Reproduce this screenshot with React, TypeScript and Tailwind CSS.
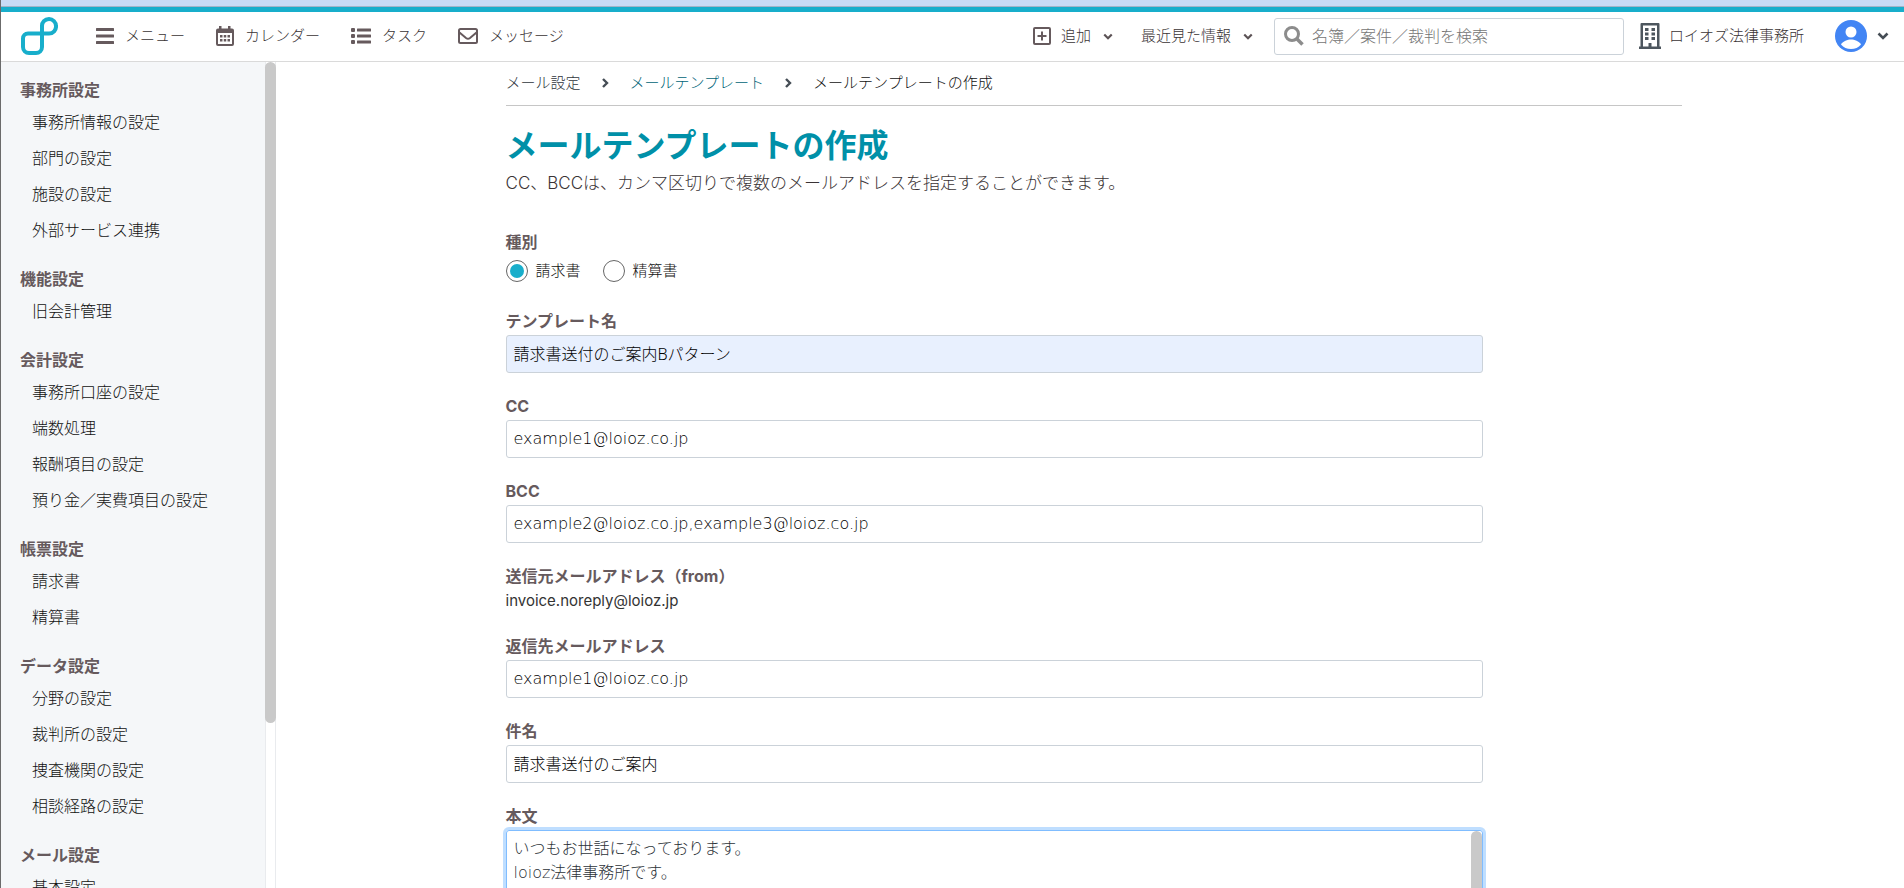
import type { ReactNode } from "react";

type MenuSection = { title: string; items: string[] };

const SECTIONS: MenuSection[] = [
  { title: "事務所設定", items: ["事務所情報の設定", "部門の設定", "施設の設定", "外部サービス連携"] },
  { title: "機能設定", items: ["旧会計管理"] },
  { title: "会計設定", items: ["事務所口座の設定", "端数処理", "報酬項目の設定", "預り金／実費項目の設定"] },
  { title: "帳票設定", items: ["請求書", "精算書"] },
  { title: "データ設定", items: ["分野の設定", "裁判所の設定", "捜査機関の設定", "相談経路の設定"] },
  { title: "メール設定", items: ["基本設定"] },
];

function Logo() {
  return (
    <svg width="38" height="40" viewBox="0 0 38 40" fill="none" stroke="#18aecb" strokeWidth="4" aria-hidden="true">
      <path d="M22 17.500H8a5 5 0 0 0-5 5V31a6 6 0 0 0 6 6h7a6 6 0 0 0 6-6V10.500a7 7 0 0 1 7-7.500a7 7 0 0 1 7 7a7 7 0 0 1-7 7.500z" />
    </svg>
  );
}

function MenuIcon() {
  return (
    <svg width="18" height="16" viewBox="0 0 18 16" fill="#665a5d" aria-hidden="true">
      <rect y="0" width="18" height="3" rx="0.500" />
      <rect y="6.500" width="18" height="3" rx="0.500" />
      <rect y="13" width="18" height="3" rx="0.500" />
    </svg>
  );
}

function CalendarIcon() {
  return (
    <svg width="18" height="20" viewBox="0 0 18 20" aria-hidden="true">
      <path fill="#665a5d" d="M3 0h2.500v2.500h6.500V0h2.500v2.500h1.500a2 2 0 0 1 2 2V18a2 2 0 0 1-2 2H2a2 2 0 0 1-2-2V4.500a2 2 0 0 1 2-2h1z" />
      <rect x="2" y="7" width="14" height="11" fill="#fff" />
      <g fill="#665a5d">
        <rect x="4" y="9" width="2.500" height="2.500" />
        <rect x="7.750" y="9" width="2.500" height="2.500" />
        <rect x="11.500" y="9" width="2.500" height="2.500" />
        <rect x="4" y="13" width="2.500" height="2.500" />
        <rect x="7.750" y="13" width="2.500" height="2.500" />
        <rect x="11.500" y="13" width="2.500" height="2.500" />
      </g>
    </svg>
  );
}

function TaskIcon() {
  return (
    <svg width="20" height="16" viewBox="0 0 20 16" fill="#665a5d" aria-hidden="true">
      <rect x="0" y="0" width="4" height="4" rx="1" />
      <rect x="0" y="6" width="4" height="4" rx="1" />
      <rect x="0" y="12" width="4" height="4" rx="1" />
      <rect x="6" y="0.500" width="14" height="3" rx="0.500" />
      <rect x="6" y="6.500" width="14" height="3" rx="0.500" />
      <rect x="6" y="12.500" width="14" height="3" rx="0.500" />
    </svg>
  );
}

function MailIcon() {
  return (
    <svg width="20" height="16" viewBox="0 0 20 16" fill="none" stroke="#665a5d" strokeWidth="2" aria-hidden="true">
      <rect x="1" y="1" width="18" height="14" rx="1.500" />
      <path d="M1.500 4.500l6.500 5.500q2 1.500 4 0l6.500-5.500" />
    </svg>
  );
}

function PlusBoxIcon() {
  return (
    <svg width="18" height="18" viewBox="0 0 18 18" fill="none" stroke="#665a5d" strokeWidth="2" aria-hidden="true">
      <rect x="1" y="1" width="16" height="16" rx="1" />
      <path d="M9 4.500v9M4.500 9h9" />
    </svg>
  );
}

function ChevronDown({ className }: { className: string }) {
  return (
    <svg className={className} viewBox="0 0 12 8" fill="none" stroke="currentColor" strokeWidth="2.600" aria-hidden="true">
      <path d="M1.500 1.500L6 6l4.500-4.500" />
    </svg>
  );
}

function ChevronRight() {
  return (
    <svg width="7" height="10" viewBox="0 0 7 10" fill="none" stroke="#454d55" strokeWidth="2.400" aria-hidden="true">
      <path d="M1 1l4 4-4 4" />
    </svg>
  );
}

function SearchIcon() {
  return (
    <svg width="20" height="20" viewBox="0 0 20 20" fill="none" stroke="#8c8c8c" aria-hidden="true">
      <circle cx="8" cy="8" r="6.500" strokeWidth="3" />
      <path d="M12.500 12.500L18.500 18.500" strokeWidth="3.500" />
    </svg>
  );
}

function BuildingIcon() {
  return (
    <svg width="22" height="26" viewBox="0 0 22 26" aria-hidden="true">
      <path fill="#4d565e" d="M2.500 0h17a1 1 0 0 1 1 1v22.500h1.500V26H0v-2.500h1.500V1a1 1 0 0 1 1-1z" />
      <path fill="#fff" d="M4 2.500h14v21h-5.500V20h-3v3.500H4z" />
      <g fill="#4d565e">
        <rect x="6" y="5" width="3.500" height="3" />
        <rect x="12.500" y="5" width="3.500" height="3" />
        <rect x="6" y="9.500" width="3.500" height="3" />
        <rect x="12.500" y="9.500" width="3.500" height="3" />
        <rect x="6" y="14" width="3.500" height="3" />
        <rect x="12.500" y="14" width="3.500" height="3" />
      </g>
    </svg>
  );
}

function Avatar() {
  return (
    <svg width="32" height="32" viewBox="0 0 32 32" aria-hidden="true">
      <circle cx="16" cy="16" r="16" fill="#4285f4" />
      <circle cx="16" cy="12" r="5.500" fill="#fff" />
      <path fill="#fff" d="M6 24.500C8 21 12.500 19.500 16 19.500s8 1.500 10 5C23.500 27.500 20 29 16 29s-7.500-1.500-10-4.500z" />
    </svg>
  );
}

function NavItem({ icon, label }: { icon: ReactNode; label: string }) {
  return (
    <button type="button" className="flex items-center gap-[11px] leading-6">
      {icon}
      {label}
    </button>
  );
}

function Header() {
  return (
    <header className="flex h-[50px] shrink-0 items-center border-b border-[#dadada] pr-[15px] pb-px pl-[19px] text-[15px] text-[#3a3335]">
      <a href="#" aria-label="ホーム">
        <Logo />
      </a>
      <nav className="ml-[38px] flex items-center gap-[31px]">
        <NavItem icon={<MenuIcon />} label="メニュー" />
        <NavItem icon={<CalendarIcon />} label="カレンダー" />
        <NavItem icon={<TaskIcon />} label="タスク" />
        <NavItem icon={<MailIcon />} label="メッセージ" />
      </nav>
      <div className="ml-auto flex items-center">
        <button type="button" className="flex items-center gap-2.5 leading-6">
          <PlusBoxIcon />
          追加
          <ChevronDown className="ml-0.5 h-[7px] w-[10px] text-[#5c5356]" />
        </button>
        <button type="button" className="ml-7 flex items-center gap-3 leading-6">
          最近見た情報
          <ChevronDown className="h-[7px] w-[10px] text-[#5c5356]" />
        </button>
        <label className="ml-[21px] flex h-[37px] w-[350px] items-center gap-2 rounded-[3px] border border-[#cbd2d9] px-[9px]">
          <SearchIcon />
          <input
            type="search"
            aria-label="検索"
            placeholder="名簿／案件／裁判を検索"
            className="min-w-0 flex-1 bg-transparent text-base outline-none placeholder:text-[#757575]"
          />
        </label>
        <button type="button" className="ml-[15px] flex items-center gap-2 leading-6">
          <BuildingIcon />
          ロイオズ法律事務所
        </button>
        <button type="button" aria-label="アカウント" className="ml-[31px] flex items-center gap-2.5 text-[#454d55]">
          <Avatar />
          <ChevronDown className="h-2 w-3" />
        </button>
      </div>
    </header>
  );
}

function Sidebar() {
  return (
    <aside className="flex w-[275px] shrink-0 overflow-hidden">
      <nav className="flex flex-1 flex-col gap-[19px] bg-[#f5f7f9] pt-4 pl-[19px]">
        {SECTIONS.map((section) => (
          <section key={section.title}>
            <h2 className="text-base leading-6 font-bold text-[#665a5d]">{section.title}</h2>
            <ul className="pt-0.5 pl-3">
              {section.items.map((item) => (
                <li key={item}>
                  <a href="#" className="block text-base leading-9 text-[#111]">
                    {item}
                  </a>
                </li>
              ))}
            </ul>
          </section>
        ))}
      </nav>
      <div className="w-[11px] border-x border-[#e9ebee] bg-white">
        <div className="-mx-px h-4/5 rounded-full bg-[#c9c9c9]" />
      </div>
    </aside>
  );
}

function TextField({ id, label, value, filled = false }: { id: string; label: string; value: string; filled?: boolean }) {
  return (
    <div className="flex flex-col gap-0.5">
      <label htmlFor={id} className="text-base leading-6 font-bold text-[#665a5d]">
        {label}
      </label>
      <input
        id={id}
        type="text"
        defaultValue={value}
        className={
          filled
            ? "h-[38px] rounded-[3px] border border-[#cbd2d9] bg-[#e8f0fe] px-[7px] pb-0.5 font-['Noto_Sans','Noto_Sans_CJK_JP',sans-serif] text-base text-black outline-none"
            : "h-[38px] rounded-[3px] border border-[#cbd2d9] bg-white px-[7px] pb-0.5 font-['DejaVu_Sans','Noto_Sans_CJK_JP',sans-serif] text-base text-black outline-none"
        }
      />
    </div>
  );
}

function RadioOption({ label, checked = false }: { label: string; checked?: boolean }) {
  return (
    <label className="flex items-center gap-2 text-[15px] leading-6 text-[#111]">
      <input
        type="radio"
        name="kind"
        defaultChecked={checked}
        className="size-[22px] appearance-none rounded-full border border-[#666] bg-white bg-clip-content p-[3px] checked:bg-[#18aecb]"
      />
      {label}
    </label>
  );
}

function TemplateForm() {
  return (
    <form className="mt-[35px] flex max-w-[977px] flex-col gap-[21px]">
      <fieldset>
        <legend className="text-base leading-6 font-bold text-[#665a5d]">種別</legend>
        <div className="flex h-[34px] items-center gap-[22px]">
          <RadioOption label="請求書" checked />
          <RadioOption label="精算書" />
        </div>
      </fieldset>
      <TextField id="name" label="テンプレート名" value="請求書送付のご案内Bパターン" filled />
      <TextField id="cc" label="CC" value="example1@loioz.co.jp" />
      <TextField id="bcc" label="BCC" value="example2@loioz.co.jp,example3@loioz.co.jp" />
      <div className="flex flex-col gap-px">
        <h3 className="text-base leading-6 font-bold text-[#665a5d]">送信元メールアドレス（from）</h3>
        <p className="text-[15px] leading-6 font-normal text-[#333]">invoice.noreply@loioz.jp</p>
      </div>
      <TextField id="reply" label="返信先メールアドレス" value="example1@loioz.co.jp" />
      <TextField id="subject" label="件名" value="請求書送付のご案内" />
      <div className="flex flex-col gap-0.5">
        <label htmlFor="body" className="text-base leading-6 font-bold text-[#665a5d]">
          本文
        </label>
        <div className="flex h-60 overflow-hidden rounded-[3px] border border-[#80bdff] ring-3 ring-[#007bff]/25">
          <textarea
            id="body"
            defaultValue={"いつもお世話になっております。\nloioz法律事務所です。"}
            className="flex-1 resize-none px-[7px] py-1.5 font-['DejaVu_Sans','Noto_Sans_CJK_JP',sans-serif] text-base leading-6 text-[#2c3238] outline-none"
          />
          <div className="w-[11px]">
            <div className="h-40 rounded-full bg-[#c9c9c9]" />
          </div>
        </div>
      </div>
    </form>
  );
}

export default function App() {
  return (
    <div className="flex h-screen flex-col overflow-hidden border-l border-[#6b6b6b] bg-white font-[Inter,'Noto_Sans_CJK_JP',sans-serif] font-light">
      <div className="h-[7px] shrink-0 border-b border-[#a3b4c8] bg-[#c9dbf5]" />
      <div className="h-[5px] shrink-0 bg-[#18aecb]" />
      <Header />
      <div className="flex min-h-0 flex-1">
        <Sidebar />
        <main className="min-w-0 flex-1 overflow-hidden pl-[7px]">
          <div className="mx-auto max-w-[1176px]">
            <nav aria-label="パンくず" className="flex h-11 items-center gap-[21px] border-b border-[#c6c6c6] pb-0.5 text-[15px] leading-6">
              <span className="text-[#2f363c]">メール設定</span>
              <ChevronRight />
              <a href="#" className="text-[#006477]">
                メールテンプレート
              </a>
              <ChevronRight />
              <span className="text-[#111]">メールテンプレートの作成</span>
            </nav>
            <h1 className="mt-4 text-[32px] leading-12 font-bold text-[#0090a8]">メールテンプレートの作成</h1>
            <p className="mt-px text-[17px] leading-6 text-[#3a3335]">
              CC、BCCは、カンマ区切りで複数のメールアドレスを指定することができます。
            </p>
            <TemplateForm />
          </div>
        </main>
      </div>
    </div>
  );
}
